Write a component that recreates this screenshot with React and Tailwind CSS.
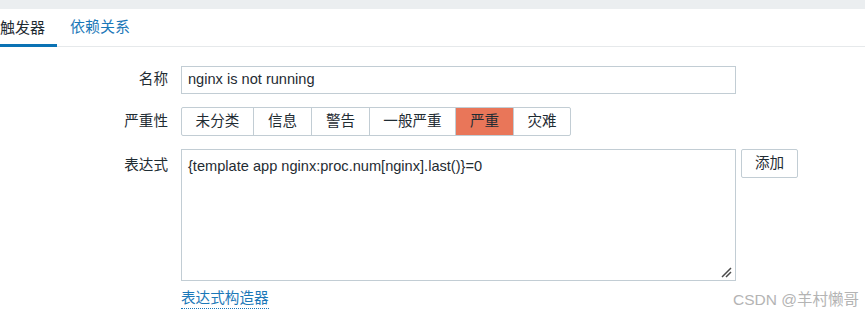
import React from 'react';

const severities = [
  { label: '未分类', w: 'w-[71px]' },
  { label: '信息', w: 'w-[58px]' },
  { label: '警告', w: 'w-[58px]' },
  { label: '一般严重', w: 'w-[86px]' },
  { label: '严重', w: 'w-[58px]', active: true },
  { label: '灾难', w: 'w-[57px]' },
];

const App = () => {
  return (
    <div
      className="w-[865px] h-[318px] bg-white overflow-hidden relative text-[14.6px] text-[#1f2c33]"
      style={{ fontFamily: '"Liberation Sans", "Noto Sans CJK SC", sans-serif' }}
    >
      <div className="h-[9px] bg-[#ebeef0]"></div>

      {/* Tabs */}
      <div className="flex h-[38px] border-b border-[#e6e9eb]">
        <div className="w-[57px] flex items-center border-b-[3px] border-[#0a72b4] -mb-px pt-[3px] text-[15px] text-[#1f2c33]">
          触发器
        </div>
        <div className="ml-[13px] flex items-center text-[15px] text-[#1b78b8]">依赖关系</div>
      </div>

      {/* Form */}
      <div className="flex flex-col gap-[13px] pt-[19px]">
        <div className="flex items-center gap-[13px]">
          <div className="w-[168px] text-right">名称</div>
          <div className="w-[555px] h-[28px] border border-[#c2cdd4] flex items-center px-[6px]">
            nginx is not running
          </div>
        </div>

        <div className="flex items-center gap-[13px]">
          <div className="w-[168px] text-right">严重性</div>
          <div className="flex h-[29px] border border-[#c2cdd4] rounded-[2px] overflow-hidden">
            {severities.map((s, i) => (
              <div
                key={s.label}
                className={`${s.w} flex items-center justify-center ${i > 0 ? 'border-l border-[#c2cdd4]' : ''} ${s.active ? 'bg-[#e97659] text-[#1f2c33]' : ''}`}
              >
                {s.label}
              </div>
            ))}
          </div>
        </div>

        <div className="flex items-start gap-[13px]">
          <div className="w-[168px] text-right pt-[6px]">表达式</div>
          <div className="flex flex-col">
            <div className="w-[555px] h-[132px] border border-[#c2cdd4] px-[6px] pt-[6px] relative">
              {'{template app nginx:proc.num[nginx].last()}=0'}
              <svg className="absolute right-[3px] bottom-[2px]" width="11" height="11" viewBox="0 0 11 11">
                <path d="M1 10 L10 1 M5 10 L10 5" stroke="#4a4a4a" strokeWidth="1.5" />
              </svg>
            </div>
            <div className="mt-[7px]">
              <span className="text-[#1b78b8] border-b border-dotted border-[#1b78b8] pb-[2px]">表达式构造器</span>
            </div>
          </div>
          <div className="ml-[-8px] w-[57px] h-[29px] border border-[#c2cdd4] rounded-[2px] flex items-center justify-center">
            添加
          </div>
        </div>
      </div>

      <div className="absolute right-[6px] bottom-[7px] text-[15.5px] text-[#b4b4b4]">CSDN @羊村懒哥</div>
    </div>
  );
};

export default App;
